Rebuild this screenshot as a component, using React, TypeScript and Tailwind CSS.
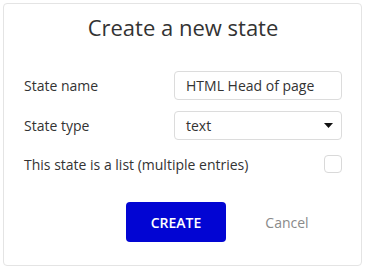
import { useState } from 'react';

const font = { fontFamily: '"Open Sans", "Noto Sans", sans-serif' };

function Caret() {
  return (
    <svg width="9" height="5" viewBox="0 0 9 5" className="shrink-0">
      <path d="M0 0h9L4.5 5z" fill="#111" />
    </svg>
  );
}

export default function App() {
  const [name, setName] = useState('HTML Head of page');
  const [isList, setIsList] = useState(false);

  return (
    <div className="w-[365px] h-[269px] bg-white p-[3px]" style={font}>
      <div className="w-[359px] h-[263px] border border-[#e4e4e4] rounded-[4px] bg-white pl-5 pr-[19px] text-[#333]">
        <h1 className="mt-[9px] h-[29px] text-center text-[22px] leading-[29px] font-normal text-[#333]">
          Create a new state
        </h1>

        <div className="mt-[29px] flex flex-col gap-[11px]">
          <div className="flex items-center justify-between">
            <label className="text-[14px]">State name</label>
            <input
              value={name}
              onChange={(e) => setName(e.target.value)}
              className="w-[168px] h-[29px] border border-[#dcdcdc] rounded-[4px] px-[11px] text-[14px] text-[#333] outline-none"
            />
          </div>
          <div className="flex items-center justify-between">
            <label className="text-[14px]">State type</label>
            <div className="w-[168px] h-[29px] border border-[#dcdcdc] rounded-[4px] pl-[11px] pr-[8px] flex items-center justify-between text-[14px]">
              <span>text</span>
              <Caret />
            </div>
          </div>
        </div>

        <div className="mt-[15px] flex items-center justify-between h-[18px]">
          <span className="text-[14px]">This state is a list (multiple entries)</span>
          <button
            onClick={() => setIsList(!isList)}
            className="w-[18px] h-[18px] border border-[#d9d9d9] rounded-[4px] bg-white"
          />
        </div>

        <div className="mt-[29px] flex items-center pl-[102px] gap-[11px]">
          <button className="w-[100px] h-[40px] rounded-[4px] bg-[#0205d3] text-white text-[14px] font-semibold">
            CREATE
          </button>
          <button className="w-[100px] h-[40px] text-[#8a8a8a] text-[14px]">Cancel</button>
        </div>
      </div>
    </div>
  );
}
